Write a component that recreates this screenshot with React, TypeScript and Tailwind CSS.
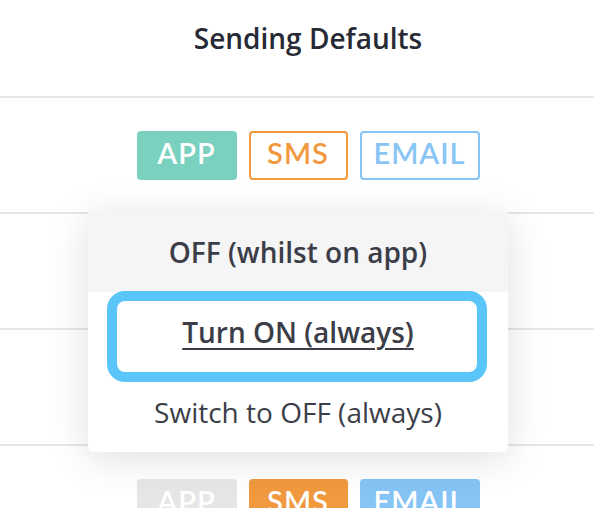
import React from "react";

const font = { fontFamily: '"Open Sans", "Liberation Sans", sans-serif' };
const badgeFont = { fontFamily: 'Lato, "Open Sans", sans-serif' };

function Badge({ label, cls, w }: { label: string; cls: string; w: string }) {
  return (
    <div
      className={`flex h-[49px] items-center justify-center rounded-[4px] text-[29px] font-semibold tracking-[1px] ${w} ${cls}`}
      style={badgeFont}
    >
      <span className="leading-none -mt-[5px]">{label}</span>
    </div>
  );
}

function BadgeRow({ variant }: { variant: "outline" | "solid" }) {
  return (
    <div className="flex h-[114px] items-center justify-center pl-[22px]">
      <div className="flex gap-[12px]">
        {variant === "outline" ? (
          <>
            <Badge label="APP" w="w-[100px]" cls="bg-[#7bd1c0] text-white" />
            <Badge label="SMS" w="w-[99px]" cls="border-2 border-[#f0993e] text-[#f0993e] bg-white" />
            <Badge label="EMAIL" w="w-[120px]" cls="border-2 border-[#88c5f5] text-[#88c5f5] bg-white" />
          </>
        ) : (
          <>
            <Badge label="APP" w="w-[100px]" cls="bg-[#e6e6e6] text-white" />
            <Badge label="SMS" w="w-[99px]" cls="bg-[#f0993e] text-white" />
            <Badge label="EMAIL" w="w-[120px]" cls="bg-[#85c4f4] text-white" />
          </>
        )}
      </div>
    </div>
  );
}

export default function App() {
  return (
    <div className="relative h-[508px] w-[594px] overflow-hidden bg-white" style={font}>
      <div className="h-[96px] pt-[20px] pl-[22px] text-center">
        <div className="text-[28px] font-semibold leading-[36px] text-[#272a35]">Sending Defaults</div>
      </div>
      <div className="border-t-2 border-[#e6e6e6]">
        <BadgeRow variant="outline" />
      </div>
      <div className="h-[116px] border-t-2 border-[#e6e6e6]" />
      <div className="h-[116px] border-t-2 border-[#e6e6e6]" />
      <div className="border-t-2 border-[#e6e6e6]">
        <BadgeRow variant="solid" />
      </div>

      <div className="absolute left-[88px] top-[212px] w-[420px] rounded-b-[6px] bg-white shadow-[0_6px_40px_rgba(0,0,0,0.13)]">
        <div className="flex h-[80px] items-center justify-center bg-[#f5f5f5] text-[28px] font-semibold text-[#3b3e48]">
          OFF (whilst on app)
        </div>
        <div className="relative flex h-[80px] items-center justify-center text-[28px] font-semibold text-[#3b3e48]">
          <span className="underline decoration-[1.5px] underline-offset-[5px]">Turn ON (always)</span>
          <div className="pointer-events-none absolute left-[19px] right-[21px] top-[-1px] h-[91px] rounded-[18px] border-[10px] border-[#5ac5f8]" />
        </div>
        <div className="flex h-[80px] items-center justify-center text-[28px] font-normal text-[#3b3e48]">
          Switch to OFF (always)
        </div>
      </div>
    </div>
  );
}
